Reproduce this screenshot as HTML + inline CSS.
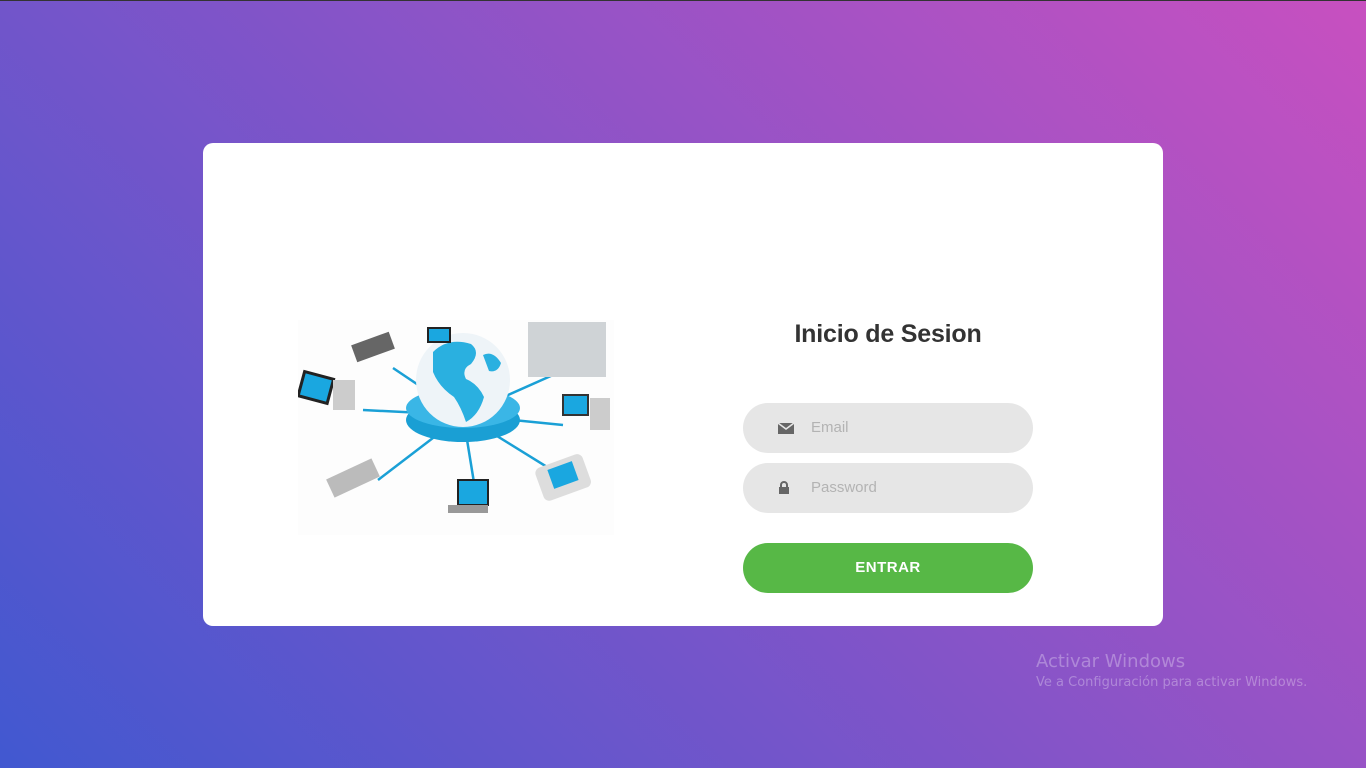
<!DOCTYPE html>
<html><head><meta charset="utf-8"><style>
*{margin:0;padding:0;box-sizing:border-box}
html,body{width:1366px;height:768px;overflow:hidden}
body{background:linear-gradient(-135deg,#c850c0 0%,#4158d0 100%);font-family:"Liberation Sans",sans-serif;position:relative}
.topline{position:absolute;left:0;top:0;width:1366px;height:1px;background:#333}
.card{position:absolute;left:203px;top:143px;width:960px;height:483px;background:#fff;border-radius:10px}
.img{position:absolute;left:95px;top:177px;width:316px;height:215px}
h1{position:absolute;left:540px;top:177px;width:290px;text-align:center;font-size:25px;font-weight:bold;color:#333;letter-spacing:-0.2px}
.inp{position:absolute;left:540px;width:290px;height:50px;border-radius:25px;background:#e6e6e6;font-size:15px;color:#b3b3b3;line-height:50px;padding-left:68px}
.ico{position:absolute;left:35px;top:0;height:50px;display:flex;align-items:center}
.btn{position:absolute;left:540px;top:400px;width:290px;height:50px;border-radius:25px;background:#57b846;color:#fff;font-weight:bold;font-size:15px;text-align:center;line-height:50px;letter-spacing:0.5px}
.act{position:absolute;left:1036px;top:651px;color:rgba(255,255,255,0.3);font-family:"DejaVu Sans","Liberation Sans",sans-serif}
.act .a{font-size:18px}.act .b{font-size:13px;margin-top:3px}
</style></head><body>
<div class="topline"></div>
<div class="card">
<svg class="img" viewBox="0 0 316 215">
<rect width="316" height="215" fill="#fdfdfd"/>
<g stroke="#1aa0d6" stroke-width="2.5">
<line x1="165" y1="95" x2="95" y2="48"/><line x1="165" y1="95" x2="255" y2="55"/>
<line x1="165" y1="95" x2="65" y2="90"/><line x1="165" y1="95" x2="265" y2="105"/>
<line x1="165" y1="95" x2="80" y2="160"/><line x1="165" y1="95" x2="178" y2="175"/>
<line x1="165" y1="95" x2="262" y2="155"/>
</g>
<ellipse cx="165" cy="100" rx="57" ry="22" fill="#1a9fd4"/>
<ellipse cx="165" cy="88" rx="57" ry="20" fill="#3ab6e6"/>
<circle cx="165" cy="60" r="47" fill="#eef4f8"/>
<path d="M135 32 q15 -15 38 -8 q10 8 0 20 q-10 5 -5 15 q12 5 18 18 q-5 18 -18 25 q-5 -15 -12 -25 q-15 -10 -21 -25 z" fill="#2ab0e0"/>
<path d="M185 35 q10 -5 18 8 q-3 10 -12 8 z" fill="#2ab0e0"/>
<rect x="230" y="2" width="78" height="55" fill="#cfd3d6"/>
<rect x="55" y="18" width="40" height="18" fill="#666" transform="rotate(-20 75 27)"/>
<rect x="3" y="55" width="30" height="25" fill="#1aa7e0" stroke="#222" stroke-width="3" transform="rotate(15 18 67)"/>
<rect x="35" y="60" width="22" height="30" fill="#ccc"/>
<rect x="265" y="75" width="25" height="20" fill="#1aa7e0" stroke="#333" stroke-width="2"/>
<rect x="292" y="78" width="20" height="32" fill="#ccc"/>
<rect x="30" y="148" width="50" height="20" fill="#bbb" transform="rotate(-25 55 158)"/>
<rect x="160" y="160" width="30" height="25" fill="#1aa7e0" stroke="#222" stroke-width="2"/>
<rect x="150" y="185" width="40" height="8" fill="#999"/>
<rect x="240" y="140" width="50" height="35" rx="6" fill="#ddd" transform="rotate(-20 265 157)"/>
<rect x="252" y="145" width="26" height="20" fill="#1aa7e0" transform="rotate(-20 265 155)"/>
<rect x="130" y="8" width="22" height="14" fill="#1aa7e0" stroke="#222" stroke-width="2"/>
</svg>
<h1>Inicio de Sesion</h1>
<div class="inp" style="top:260px"><span class="ico"><svg width="16" height="13" viewBox="0 0 16 13"><rect y="1" width="16" height="11" fill="#666"/><path d="M0 1 L8 7 L16 1" stroke="#e6e6e6" stroke-width="1.5" fill="none"/></svg></span>Email</div>
<div class="inp" style="top:320px"><span class="ico"><svg width="12" height="14" viewBox="0 0 12 14"><path d="M3 6 V4 a3 3 0 0 1 6 0 V6" stroke="#666" stroke-width="2" fill="none"/><rect x="1" y="6" width="10" height="7" fill="#666"/></svg></span>Password</div>
<div class="btn">ENTRAR</div>
</div>
<div class="act"><div class="a">Activar Windows</div><div class="b">Ve a Configuración para activar Windows.</div></div>
</body></html>
